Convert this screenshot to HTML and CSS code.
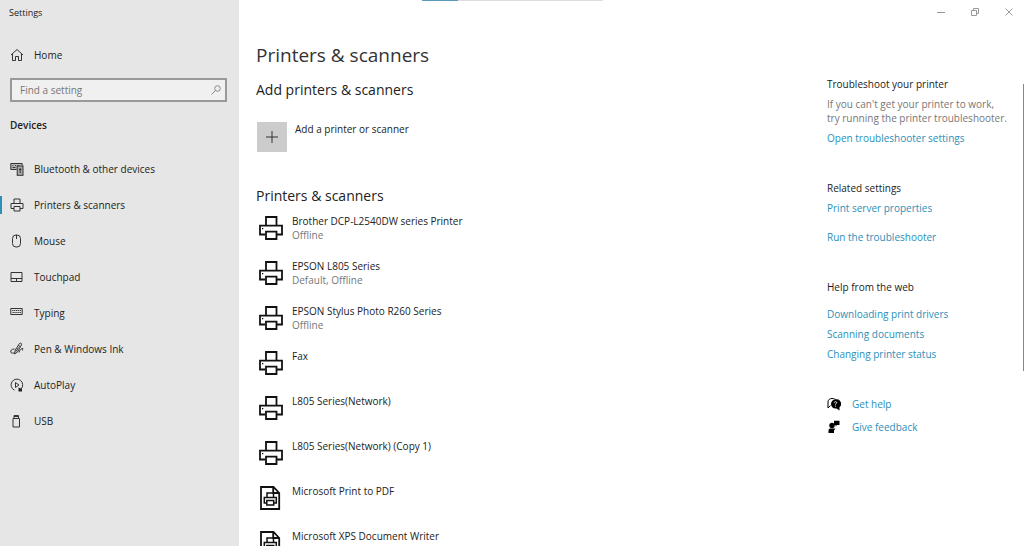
FILE: index.html
```html
<!DOCTYPE html>
<html lang="en">
<head>
  <meta charset="UTF-8">
  <meta name="viewport" content="width=device-width, initial-scale=1.0">
  <title>Settings</title>
  <link rel="stylesheet" href="styles.css">
</head>
<body>
  <!-- Shared icons -->
  <svg class="sprite" aria-hidden="true">
    <symbol id="printer" viewBox="0 0 24 24">
      <path d="M7 9.500V1h10.500v8.500M6 18.500H1V9.700h22v8.800H18M7 15.700h10.500V23H7z" fill="none" stroke="currentColor" stroke-width="1.800"/>
      <path d="M3 12h1.300v1.300H3z" fill="currentColor"/>
    </symbol>
    <symbol id="file-printer" viewBox="0 0 24 24">
      <path d="M2 1h12.500l5.700 6v16H2zM14.200 1v6h6" fill="none" stroke="currentColor" stroke-width="1.800"/>
      <path d="M8 11V7h6.500v4M7.500 17H5.300v-5.500h12V17H15M7.800 14.500h6.900v4.500H7.800z" fill="none" stroke="currentColor" stroke-width="1.500"/>
    </symbol>
  </svg>

  <div class="window">
    <nav class="sidebar">
      <div class="app-title">Settings</div>
      <a href="#" class="nav-item home">
        <svg class="nav-icon" viewBox="0 0 14 14"><path d="M1 7l6-5.500L13 7M2.500 6v6.500H5.500V8.500h3v4h3V6"/></svg>
        Home
      </a>
      <form class="search">
        <input type="text" id="search" placeholder="Find a setting" aria-label="Find a setting">
        <svg class="search-icon" viewBox="0 0 12 12"><circle cx="7.500" cy="4.500" r="2.800"/><path d="M5.500 6.500L1.500 10.500"/></svg>
      </form>
      <h2 class="nav-heading">Devices</h2>
      <ul class="nav-list">
        <li><a href="#" class="nav-item">
          <svg class="nav-icon" viewBox="0 0 14 14"><path d="M6.500 7.500H.8v-6h11.400v2" fill="#bbb"/><path d="M2.500 3.500h1M5 3.500h1M7.500 3.500h1M2.500 5.500h3" stroke-width="1.200"/><rect x="7.200" y="4" width="5.800" height="9.300" fill="#aaa"/><path d="M9 7.500h2.400M10.200 6v5"/></svg>
          Bluetooth &amp; other devices</a></li>
        <li><a href="#" class="nav-item active">
          <svg class="nav-icon" viewBox="0 0 14 14"><path d="M4 5.500V1h6v4.500M4 10.500H1v-5h12v5h-3M4 8.500h6V13H4z"/></svg>
          Printers &amp; scanners</a></li>
        <li><a href="#" class="nav-item">
          <svg class="nav-icon" viewBox="0 0 14 14"><rect x="2.500" y="1" width="8" height="12" rx="3.500"/><path d="M6.500 1v4"/></svg>
          Mouse</a></li>
        <li><a href="#" class="nav-item">
          <svg class="nav-icon" viewBox="0 0 14 14"><path d="M1 2.500h11v9H1zM1 8.500h11M6.500 8.500v3"/></svg>
          Touchpad</a></li>
        <li><a href="#" class="nav-item">
          <svg class="nav-icon" viewBox="0 0 14 14"><path d="M.8 2.500h11.400v6H.8z"/><path d="M2.200 4.500h9M2.500 6.500h8.500" stroke-dasharray="1.300 .6"/></svg>
          Typing</a></li>
        <li><a href="#" class="nav-item">
          <svg class="nav-icon" viewBox="0 0 14 14"><path d="M4.500 12l.8-4L9.500 1.500c.8-1 2.700 0 2 1.300L7.500 10zM8.300 3.500l2.200 1.200M8.500 5.500L6 9.500M4.500 7C1.500 7 .5 8.500.8 10c.3 1.500 2.200 1.500 3.700.5M9 10.500c.5-2.500 2-4 4-4-1 1-.8 1.800 0 2"/></svg>
          Pen &amp; Windows Ink</a></li>
        <li><a href="#" class="nav-item">
          <svg class="nav-icon" viewBox="0 0 14 14"><path d="M4.500 12.200A5.800 5.800 0 1 1 11 11M5.500 4.500v5l3.500-2.500z"/><path d="M8.500 9.500l3.500 1.500v2.500H8.500z" fill="#222" stroke="none"/></svg>
          AutoPlay</a></li>
        <li><a href="#" class="nav-item">
          <svg class="nav-icon" viewBox="0 0 14 14"><path d="M3 4.500h6.500V13H3zM4 4.500V1.500h4.500v3M4 2.500h4.500"/></svg>
          USB</a></li>
      </ul>
    </nav>

    <main class="content">
      <h1>Printers &amp; scanners</h1>
      <h2>Add printers &amp; scanners</h2>
      <button type="button" class="add-printer">
        <span class="plus"><svg viewBox="0 0 14 14"><path d="M7 1v12M1 7h12"/></svg></span>
        <span>Add a printer or scanner</span>
      </button>
      <h2>Printers &amp; scanners</h2>
      <ul class="printers">
        <li><svg><use href="#printer"/></svg><div>Brother DCP-L2540DW series Printer<p>Offline</p></div></li>
        <li><svg><use href="#printer"/></svg><div>EPSON L805 Series<p>Default, Offline</p></div></li>
        <li><svg><use href="#printer"/></svg><div>EPSON Stylus Photo R260 Series<p>Offline</p></div></li>
        <li><svg><use href="#printer"/></svg><div>Fax</div></li>
        <li><svg><use href="#printer"/></svg><div>L805 Series(Network)</div></li>
        <li><svg><use href="#printer"/></svg><div>L805 Series(Network) (Copy 1)</div></li>
        <li><svg><use href="#file-printer"/></svg><div>Microsoft Print to PDF</div></li>
        <li><svg><use href="#file-printer"/></svg><div>Microsoft XPS Document Writer</div></li>
      </ul>
    </main>

    <aside class="related">
      <section>
        <h3>Troubleshoot your printer</h3>
        <p>If you can't get your printer to work,<br>try running the printer troubleshooter.</p>
        <a href="#">Open troubleshooter settings</a>
      </section>
      <section class="spaced">
        <h3>Related settings</h3>
        <a href="#">Print server properties</a>
        <a href="#">Run the troubleshooter</a>
      </section>
      <section class="web-help">
        <h3>Help from the web</h3>
        <a href="#">Downloading print drivers</a>
        <a href="#">Scanning documents</a>
        <a href="#">Changing printer status</a>
      </section>
      <div class="support">
        <a href="#">
          <svg viewBox="0 0 14 14"><path d="M3.500 8.500L1 11V5C1 2.500 3 1.500 5 1.500s3 .5 4 1.500" fill="none" stroke="#000"/><path d="M8.500 2.500a4.500 4.500 0 1 0 0 9h1l3 2v-3.200A4.500 4.500 0 0 0 8.500 2.500z"/><path d="M7.200 5.700c.2-1.500 2.800-1.300 2.500.1-.2.800-1.200.8-1.200 1.900M8.500 8.700v1" fill="none" stroke="#fff" stroke-width=".9"/></svg>
          Get help</a>
        <a href="#">
          <svg viewBox="0 0 14 14"><circle cx="5" cy="5.500" r="2.700"/><path d="M1.500 13V10.500C1.500 9 2.500 8.500 4 8.500h4.500L7 10.500V13zM7 .8h5.500V5H10L8.500 6.500V5H7z"/></svg>
          Give feedback</a>
      </div>
    </aside>

    <div class="progress"></div>
    <div class="caption-buttons">
      <button type="button" aria-label="Minimize"><svg viewBox="0 0 10 10"><path d="M1 5.500h8"/></svg></button>
      <button type="button" aria-label="Restore"><svg viewBox="0 0 10 10"><path d="M1.500 3.500h5v5h-5zM3.500 3.500v-2h5v5h-2"/></svg></button>
      <button type="button" aria-label="Close"><svg viewBox="0 0 10 10"><path d="M1.500 1.500l7 7M8.500 1.500l-7 7"/></svg></button>
    </div>
    <div class="scrollbar"></div>
  </div>
</body>
</html>
```
FILE: styles.css
```css
* {
  box-sizing: border-box;
}
body {
  margin: 0;
  font-family: "Segoe UI", "Open Sans", sans-serif;
  font-size: 10px;
  line-height: 14px;
  color: #222;
  background-color: #fff;
}
h1, h2, h3, p, ul {
  margin: 0;
  padding: 0;
  font-weight: normal;
}
ul {
  list-style: none;
}
a {
  color: #2b8fb8;
  text-decoration: none;
}
button {
  padding: 0;
  border: none;
  background: none;
  font: inherit;
  color: inherit;
  cursor: pointer;
}
.sprite {
  display: none;
}
.window {
  position: relative;
  display: flex;
  height: 100vh;
  overflow: hidden;
}

/* Sidebar */
.sidebar {
  flex: 0 0 239px;
  background-color: #e6e6e6;
}
.app-title {
  padding: 6px 9px 0;
  font-size: 9px;
}
.nav-item {
  display: flex;
  align-items: center;
  gap: 10px;
  height: 36px;
  padding-left: 10px;
  color: #222;
}
.home {
  margin: 17px 0 5px;
}
.nav-icon {
  width: 14px;
  height: 14px;
  fill: none;
  stroke: #333;
}
.active {
  position: relative;
}
.active::before {
  content: "";
  position: absolute;
  left: 0;
  width: 2px;
  height: 18px;
  background-color: #2b8fb8;
}
.search {
  position: relative;
  margin: 0 12px 0 10px;
}
.search input {
  display: block;
  width: 100%;
  height: 24px;
  padding: 0 8px;
  border: 2px solid #999;
  border-radius: 0;
  background-color: #f0f0f0;
  font: inherit;
}
.search input::placeholder {
  color: #777;
}
.search-icon {
  position: absolute;
  top: 6px;
  right: 5px;
  width: 12px;
  height: 12px;
  fill: none;
  stroke: #888;
}
.nav-heading {
  margin: 16px 10px 19px;
  font-size: 10px;
  font-weight: 600;
}

/* Content */
.content {
  flex: 1;
  padding: 40px 0 0 17px;
}
h1 {
  font-size: 19px;
  line-height: 30px;
  color: #333;
}
.content h2 {
  margin-top: 10px;
  font-size: 14px;
  line-height: 20px;
}
.add-printer {
  display: flex;
  gap: 8px;
  margin: 22px 0 34px 1px;
}
.plus {
  display: flex;
  align-items: center;
  justify-content: center;
  width: 30px;
  height: 30px;
  background-color: #ccc;
}
.plus svg {
  width: 14px;
  height: 14px;
  stroke: #333;
}
.printers {
  margin-top: 8px;
}
.printers li {
  display: flex;
  gap: 9px;
  height: 45px;
  padding-left: 3px;
}
.printers svg {
  width: 24px;
  height: 24px;
  margin-top: 2px;
  color: #111;
}
.printers p, .related p {
  color: #777;
}

/* Right column */
.related {
  flex: 0 0 197px;
  padding-top: 77px;
}
.related h3 {
  margin-bottom: 6px;
  font-size: 10px;
}
.related a {
  display: block;
  margin-top: 6px;
}
.related .spaced a + a {
  margin-top: 15px;
}
.related .web-help h3 {
  margin-bottom: 13px;
}
.related section {
  margin-bottom: 36px;
}
.related .support a {
  display: flex;
  align-items: center;
  gap: 11px;
  margin-bottom: 9px;
}
.support svg {
  width: 14px;
  height: 14px;
  fill: #000;
}

/* Window chrome */
.progress {
  position: absolute;
  top: 0;
  left: 422px;
  width: 181px;
  height: 1px;
  background: linear-gradient(to right, #5b9ab8 20%, #ddd 20%);
}
.caption-buttons {
  position: absolute;
  top: 7px;
  right: 10px;
  display: flex;
  gap: 24px;
}
.caption-buttons svg {
  display: block;
  width: 10px;
  height: 10px;
  fill: none;
  stroke: #999;
}
.scrollbar {
  position: absolute;
  top: 84px;
  right: 0;
  width: 1px;
  height: 287px;
  background-color: #888;
}
```
